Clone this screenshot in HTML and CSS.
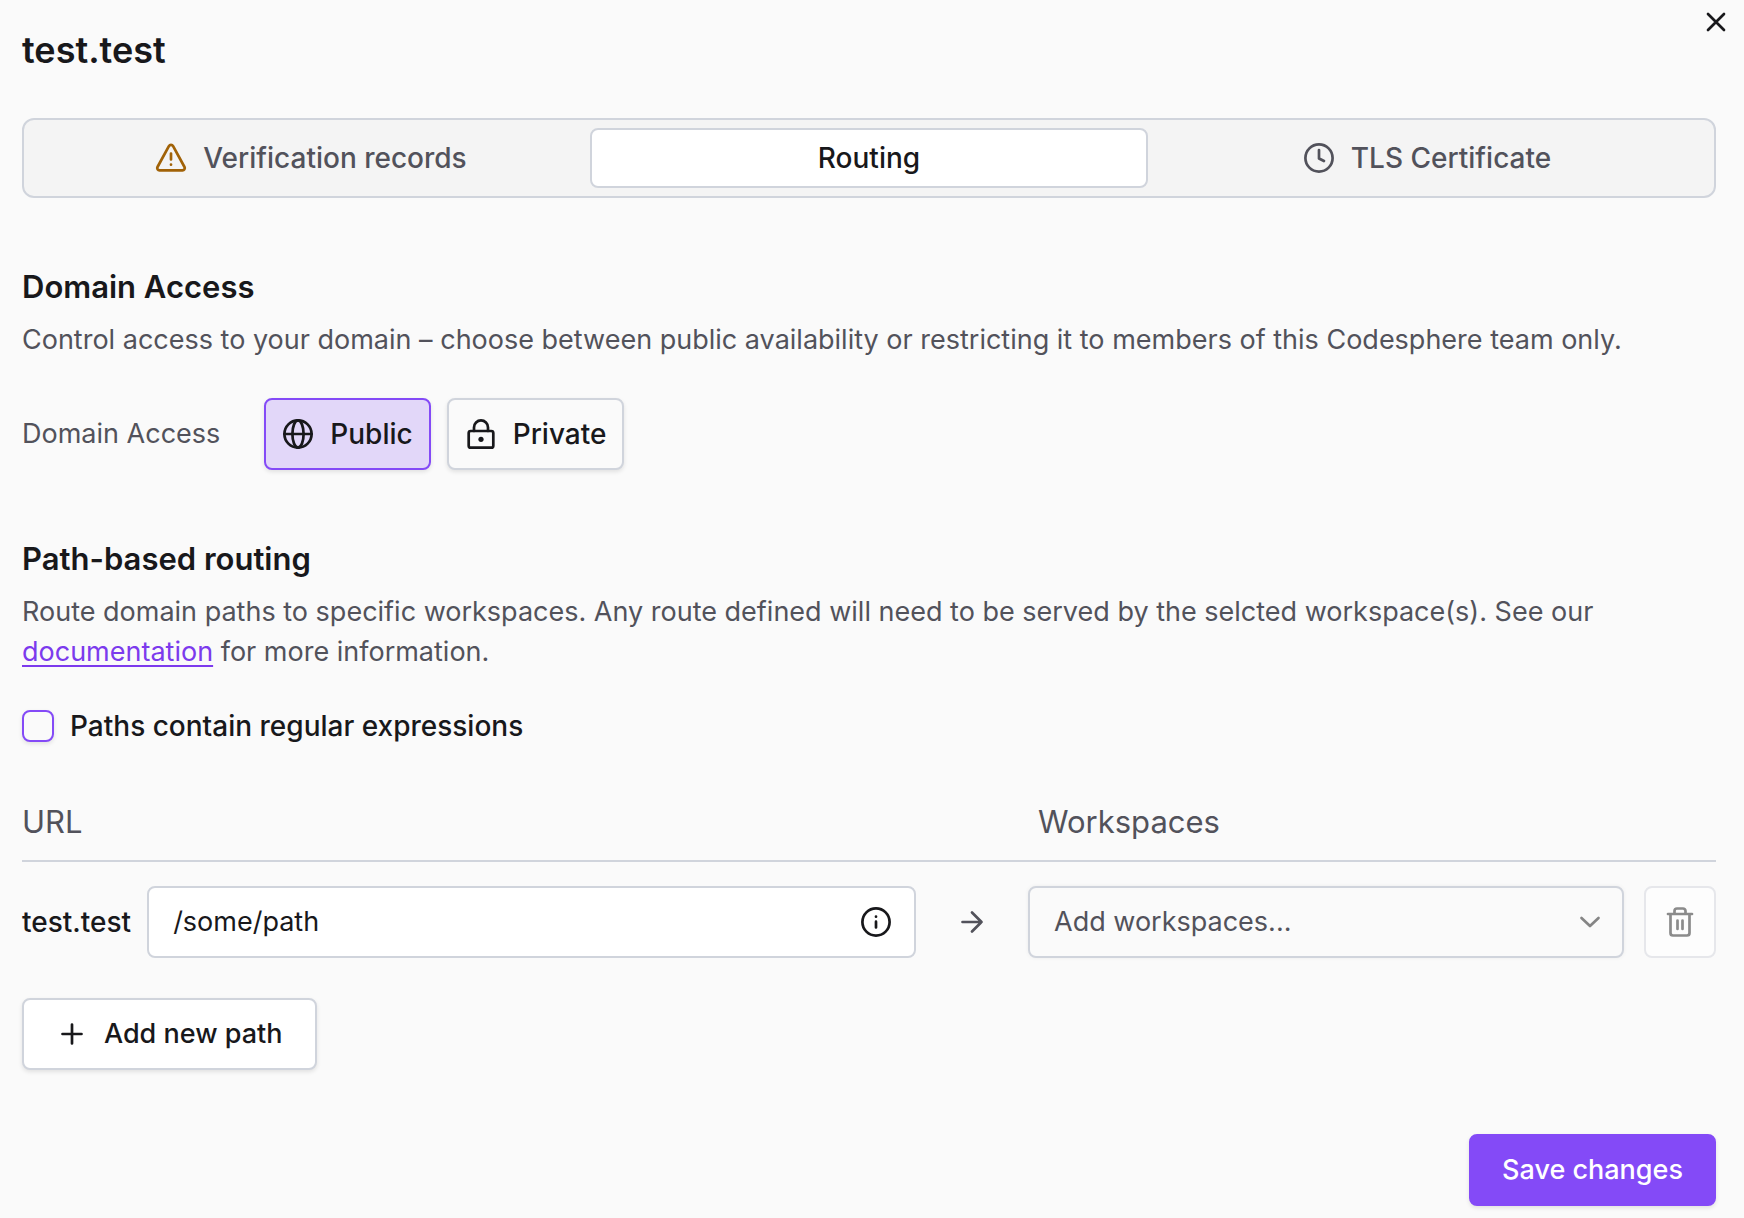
FILE: index.html
```html
<!DOCTYPE html>
<html lang="en">
<head>
<meta charset="utf-8">
<meta name="viewport" content="width=device-width, initial-scale=1">
<title>test.test – Routing</title>
<link rel="stylesheet" href="styles.css">
</head>
<body>
<main class="dialog">
  <button class="close" type="button" aria-label="Close">
    <svg class="icon" viewBox="0 0 32 32"><path d="M8 8l16 16M24 8L8 24"/></svg>
  </button>
  <h1 class="title">test.test</h1>

  <div class="tabs" role="tablist">
    <button class="tab" type="button" role="tab" aria-selected="false">
      <svg class="icon icon-warning" viewBox="0 0 32 32"><path d="M13.900 4.200a2.400 2.400 0 0 1 4.200 0l11.400 20.800a2.300 2.300 0 0 1-2.100 3.400H4.600a2.300 2.300 0 0 1-2.100-3.400z"/><path d="M16 11.500v6M16 22.500v.2"/></svg>
      Verification records
    </button>
    <button class="tab tab-active" type="button" role="tab" aria-selected="true">Routing</button>
    <button class="tab" type="button" role="tab" aria-selected="false">
      <svg class="icon" viewBox="0 0 32 32"><circle cx="16" cy="16" r="13.600"/><path d="M16 8v8.500l5 2.500"/></svg>
      TLS Certificate
    </button>
  </div>

  <section class="section">
    <h2 class="heading">Domain Access</h2>
    <p class="text">Control access to your domain – choose between public availability or restricting it to members of this Codesphere team only.</p>
    <div class="access" role="group" aria-labelledby="access-label">
      <span class="access-label" id="access-label">Domain Access</span>
      <div class="access-options">
        <button class="button button-choice button-selected" type="button" aria-pressed="true">
          <svg class="icon" viewBox="0 0 32 32"><circle cx="16" cy="16" r="13.600"/><path d="M2.400 16h27.200"/><ellipse cx="16" cy="16" rx="5.600" ry="13.600"/></svg>
          Public
        </button>
        <button class="button button-choice" type="button" aria-pressed="false">
          <svg class="icon" viewBox="0 0 32 32"><rect x="3.700" y="13" width="24.600" height="16.700" rx="2"/><path d="M9 13V9.400a7 7 0 0 1 14 0V13"/><circle class="dot" cx="16" cy="21.300" r="2.600"/></svg>
          Private
        </button>
      </div>
    </div>
  </section>

  <section class="section">
    <h2 class="heading">Path-based routing</h2>
    <p class="text">Route domain paths to specific workspaces. Any route defined will need to be served by the selcted workspace(s). See our <a class="link" href="#documentation">documentation</a> for more information.</p>
    <div class="check">
      <input class="checkbox" type="checkbox" id="regex">
      <label for="regex">Paths contain regular expressions</label>
    </div>

    <div class="routes">
      <div class="route route-head">
        <span>URL</span>
        <span class="workspaces-head">Workspaces</span>
      </div>
      <div class="route">
        <div class="path">
          <label class="path-domain" for="path">test.test</label>
          <div class="path-field">
            <input class="path-input" type="text" id="path" value="/some/path">
            <svg class="icon" viewBox="0 0 32 32"><circle cx="16" cy="16" r="13.600"/><path d="M16 15.700v5.800M16 10.600v.1"/></svg>
          </div>
        </div>
        <svg class="icon arrow" viewBox="0 0 32 32"><path d="M6.500 16h19M16 6.500l9.500 9.500-9.500 9.500"/></svg>
        <div class="select-wrap">
          <select class="select" aria-label="Workspaces">
            <option>Add workspaces...</option>
          </select>
          <svg class="icon chevron" viewBox="0 0 32 32"><path d="M7.500 12l8.500 8 8.500-8"/></svg>
        </div>
        <button class="button button-delete" type="button" aria-label="Delete path" disabled>
          <svg class="icon" viewBox="0 0 32 32"><path d="M4 8h24M6.500 8v19a2.500 2.500 0 0 0 2.500 2.500h14a2.500 2.500 0 0 0 2.500-2.500V8M10.500 8V5A2.500 2.500 0 0 1 13 2.500h6A2.500 2.500 0 0 1 21.500 5v3M13.500 14.500v8.500M18.500 14.500v8.500"/></svg>
        </button>
      </div>
    </div>

    <button class="button button-add" type="button">
      <svg class="icon" viewBox="0 0 32 32"><path d="M16 6.500v19M6.500 16h19"/></svg>
      Add new path
    </button>
  </section>

  <footer class="footer">
    <button class="button button-primary" type="button">Save changes</button>
  </footer>
</main>
</body>
</html>
```
FILE: styles.css
```css
* {
  box-sizing: border-box;
}

body {
  margin: 0;
  background: #fafafa;
  color: #18181b;
  font: 400 27px/40px Inter, "Liberation Sans", sans-serif;
}

button,
input,
select {
  margin: 0;
  font: inherit;
  color: inherit;
}

.icon {
  width: 32px;
  height: 32px;
  flex: none;
  fill: none;
  stroke: currentColor;
  stroke-width: 2.7;
  stroke-linecap: round;
  stroke-linejoin: round;
}

.dot {
  fill: currentColor;
  stroke: none;
}

.dialog {
  position: relative;
  padding: 26px 28px 12px 22px;
}

.close {
  position: absolute;
  top: 6px;
  right: 12px;
  display: flex;
  padding: 0;
  border: 0;
  background: none;
}

.title {
  margin: 0 0 44px;
  font-size: 36px;
  font-weight: 600;
  line-height: 48px;
}

.tabs {
  display: grid;
  grid-template-columns: repeat(3, 1fr);
  padding: 8px;
  border: 2px solid #d0d4dc;
  border-radius: 12px;
  background: #f4f4f4;
}

.tab {
  display: flex;
  align-items: center;
  justify-content: center;
  gap: 16px;
  min-height: 60px;
  padding: 0 16px;
  border: 2px solid transparent;
  border-radius: 8px;
  background: none;
  color: #52525b;
  font-size: 28px;
  font-weight: 500;
}

.tab-active {
  border-color: #d0d4dc;
  background: #fff;
  color: #18181b;
}

.icon-warning {
  color: #a16207;
}

.section {
  margin-top: 64px;
}

.heading {
  margin: 0 0 8px;
  font-size: 31px;
  font-weight: 600;
  line-height: 50px;
}

.text {
  margin: 0;
  color: #52525b;
}

.link {
  color: #7c3aed;
  text-underline-offset: 4px;
  text-decoration-thickness: 2px;
}

.access {
  display: flex;
  align-items: center;
  gap: 44px;
  margin-top: 38px;
}

.access-label {
  color: #52525b;
}

.access-options {
  display: flex;
  gap: 16px;
}

.button {
  display: flex;
  align-items: center;
  justify-content: center;
  gap: 16px;
  height: 72px;
  border: 2px solid #d0d4dc;
  border-radius: 8px;
  background: #fff;
  font-weight: 500;
  box-shadow: 0 2px 4px rgba(0, 0, 0, 0.1);
}

.button-choice {
  padding: 0 16px;
  background: #fafafa;
  font-size: 28px;
}

.button-selected {
  border-color: #844af7;
  background: #e2d7f9;
}

.check {
  display: flex;
  align-items: center;
  gap: 16px;
  margin-top: 38px;
  font-size: 28px;
  font-weight: 500;
  line-height: 32px;
}

.checkbox {
  appearance: none;
  width: 32px;
  height: 32px;
  border: 2px solid #844af7;
  border-radius: 8px;
  background: #fafafa;
  box-shadow: 0 2px 4px rgba(0, 0, 0, 0.1);
}

.routes {
  display: grid;
  gap: 24px;
  margin-top: 56px;
}

.route {
  display: grid;
  grid-template-columns: 3fr 112px 2fr 92px;
  align-items: center;
}

.route-head {
  padding-bottom: 14px;
  border-bottom: 2px solid #d0d4dc;
  color: #52525b;
  font-size: 31px;
  line-height: 48px;
}

.workspaces-head {
  grid-column: 3;
  padding-left: 10px;
}

.path {
  display: flex;
  align-items: center;
  gap: 16px;
}

.path-domain {
  font-size: 28px;
  font-weight: 500;
}

.path-field {
  display: flex;
  flex: 1;
  align-items: center;
  height: 72px;
  padding: 0 22px 0 24px;
  border: 2px solid #d0d4dc;
  border-radius: 8px;
  background: #fff;
}

.path-input {
  flex: 1;
  min-width: 0;
  padding: 0;
  border: 0;
  background: none;
}

.arrow {
  justify-self: center;
  color: #52525b;
}

.select-wrap {
  display: grid;
  align-items: center;
}

.select,
.chevron {
  grid-area: 1 / 1;
}

.select {
  appearance: none;
  width: 100%;
  height: 72px;
  padding: 0 64px 0 24px;
  border: 2px solid #d0d4dc;
  border-radius: 8px;
  background: #fafafa;
  color: #52525b;
  box-shadow: 0 0 4px rgba(0, 0, 0, 0.06);
}

.chevron {
  justify-self: end;
  margin-right: 18px;
  color: #858585;
  pointer-events: none;
}

.button-delete {
  justify-self: end;
  width: 72px;
  padding: 0;
  border-color: #e6e7eb;
  background: #fdfdfd;
  color: #8b8b8b;
  box-shadow: none;
}

.button-add {
  margin-top: 40px;
  padding: 0 32px;
}

.footer {
  display: flex;
  justify-content: flex-end;
  margin-top: 64px;
}

.button-primary {
  padding: 0 31px;
  border-color: #844af7;
  background: #844af7;
  color: #fff;
}
```
